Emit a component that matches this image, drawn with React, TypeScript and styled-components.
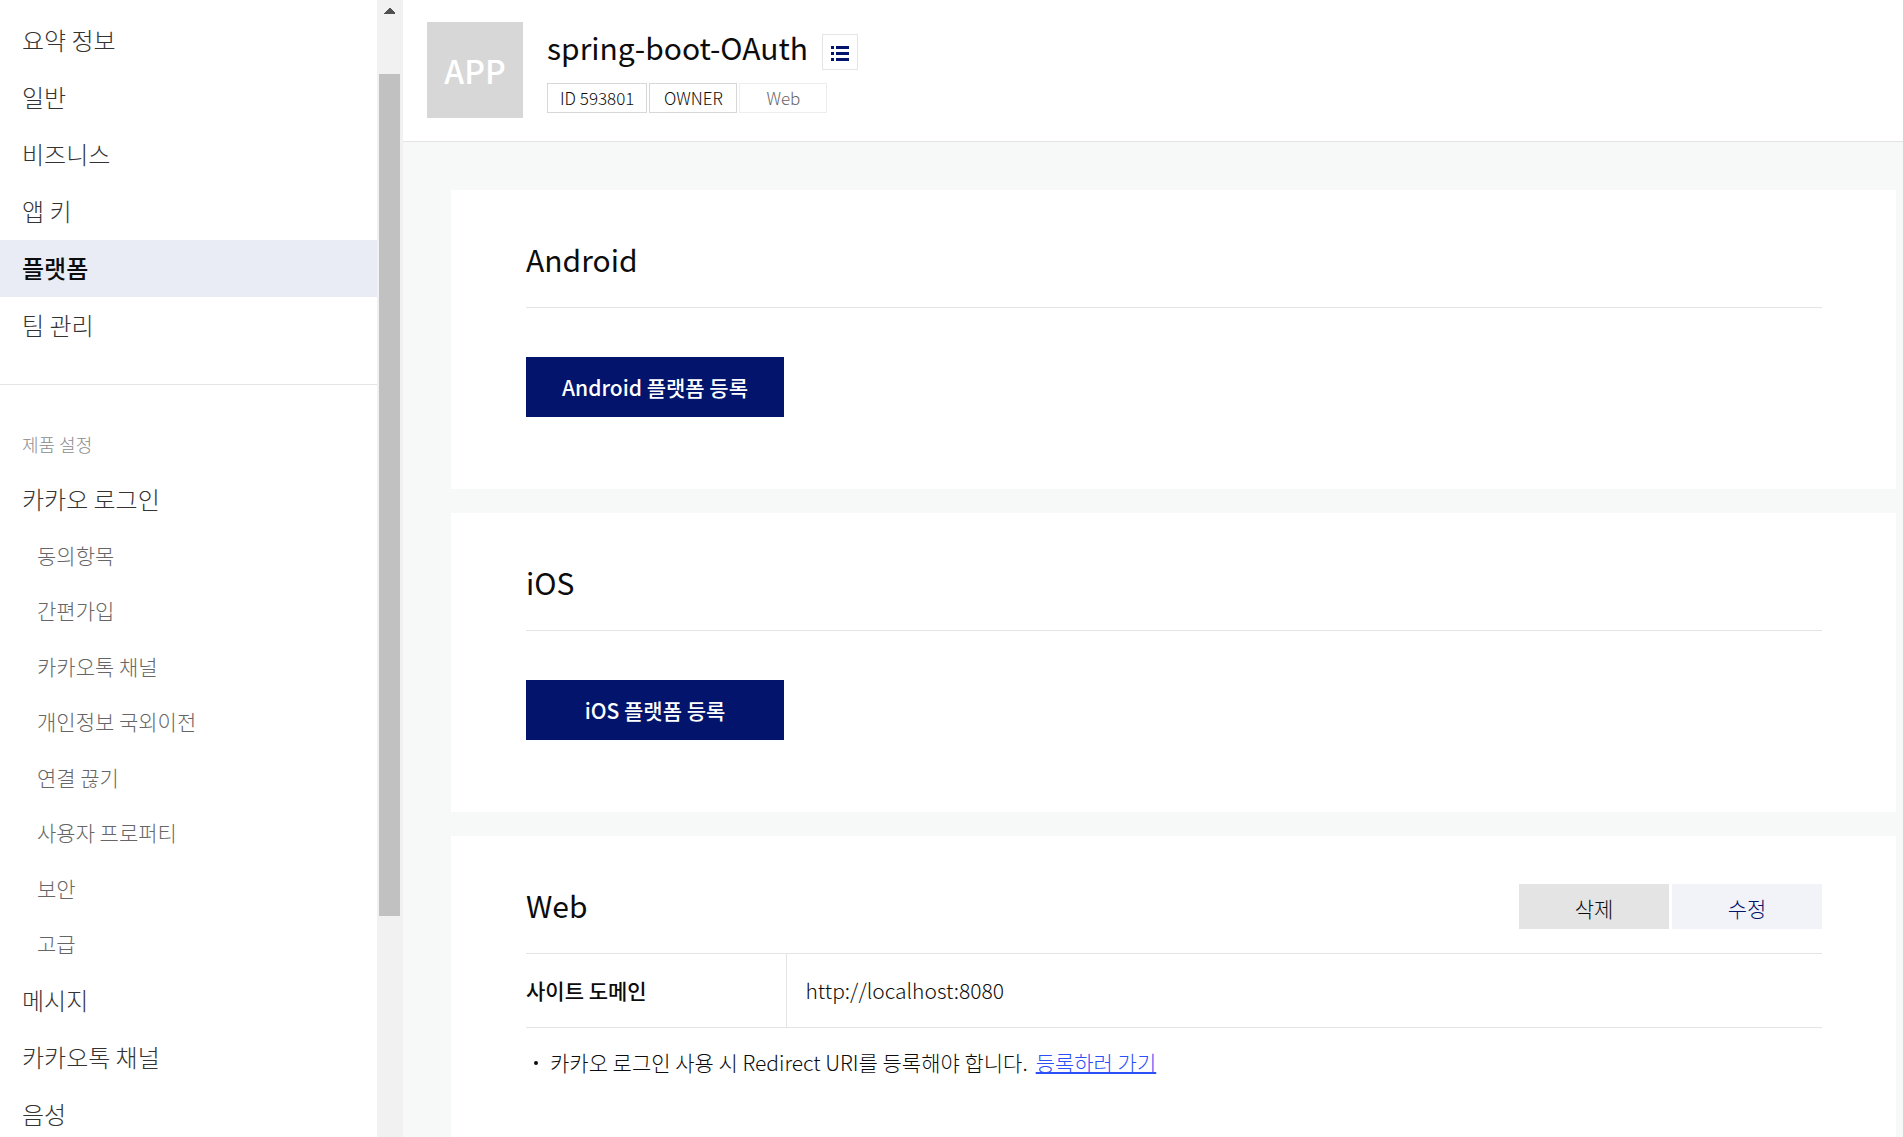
import React from "react";
import styled, { createGlobalStyle } from "styled-components";

const color = {
  navy: "#02146b",
  line: "#e4e4e4",
  text: "#0c0c0c",
  nav: "#333333",
  sub: "#666666",
  canvas: "#f6f9f8",
};

const GlobalStyle = createGlobalStyle`
  *, *::before, *::after { box-sizing: border-box; }
  body {
    margin: 0;
    background: ${color.canvas};
    color: ${color.text};
    font-family: "Noto Sans CJK KR", "Noto Sans", sans-serif;
    font-size: 21px;
    font-weight: 300;
  }
  h1, h2, p, ul { margin: 0; padding: 0; }
  ul { list-style: none; }
  button { font-family: inherit; cursor: pointer; }
`;

const Layout = styled.div`
  display: flex;
  height: 100vh;
  overflow: hidden;
`;

const Sidebar = styled.aside`
  display: flex;
  flex: 0 0 403px;
  overflow: hidden;
`;

const Nav = styled.nav`
  flex: 1;
  padding-top: 12px;
  background: #fff;
`;

const NavLink = styled.a<{ $active?: boolean }>`
  display: flex;
  align-items: center;
  height: 57px;
  padding: 0 22px 2px;
  font-size: 24px;
  line-height: 36px;
  font-weight: ${(p) => (p.$active ? 500 : 300)};
  color: ${(p) => (p.$active ? color.text : color.nav)};
  background: ${(p) => (p.$active ? "#e9ecf5" : "transparent")};
  text-decoration: none;
`;

const NavSection = styled.section`
  margin-top: 30px;
  padding-top: 45px;
  border-top: 1px solid ${color.line};
`;

const SectionLabel = styled.p`
  padding: 0 22px 13px;
  font-size: 18px;
  line-height: 28px;
  color: #8c8c8c;
`;

const SubList = styled.ul`
  display: grid;
  grid-auto-rows: 1fr;
  min-height: 444px;
`;

const SubLink = styled.a`
  display: flex;
  align-items: center;
  height: 100%;
  padding: 0 37px 2px;
  font-size: 21px;
  line-height: 32px;
  color: ${color.sub};
  text-decoration: none;
`;

const ScrollTrack = styled.div`
  display: flex;
  flex-direction: column;
  flex: 0 0 26px;
  padding: 0 3px 0 2px;
  background: #f1f1f1;
`;

const ScrollArrow = styled.svg`
  display: block;
  flex: 0 0 24px;
  width: 21px;
  fill: #505050;
`;

const ScrollPart = styled.div<{ $grow: number; $thumb?: boolean }>`
  flex: ${(p) => p.$grow} 1 0;
  background: ${(p) => (p.$thumb ? "#c1c1c1" : "transparent")};
`;

const Main = styled.main`
  flex: 1;
  min-width: 0;
`;

const AppHeader = styled.header`
  display: flex;
  gap: 24px;
  padding: 22px 24px 23px;
  background: #fff;
  border-bottom: 1px solid ${color.line};
`;

const AppThumb = styled.div`
  display: flex;
  align-items: center;
  justify-content: center;
  width: 96px;
  height: 96px;
  background: #d7d7d7;
  color: #fff;
  font-size: 32px;
  font-weight: 500;
`;

const AppInfo = styled.div`
  display: flex;
  flex-direction: column;
  gap: 13px;
  padding-top: 4px;
`;

const TitleRow = styled.div`
  display: flex;
  align-items: flex-start;
  gap: 14px;
  height: 44px;
`;

const AppTitle = styled.h1`
  font-size: 30px;
  line-height: 42px;
  font-weight: 400;
`;

const IconButton = styled.button`
  display: flex;
  align-items: center;
  justify-content: center;
  align-self: flex-end;
  width: 36px;
  height: 36px;
  padding: 2px 0 0;
  background: #fff;
  border: 1px solid ${color.line};
`;

const Tags = styled.ul`
  display: flex;
  gap: 2px;
`;

const Tag = styled.li<{ $muted?: boolean }>`
  display: flex;
  align-items: center;
  justify-content: center;
  min-width: 88px;
  height: 30px;
  padding: 0 12px;
  font-size: 17px;
  line-height: 28px;
  color: ${(p) => (p.$muted ? color.sub : color.text)};
  border: 1px solid ${(p) => (p.$muted ? "#ededed" : "#d7d7d7")};
`;

const Cards = styled.div`
  display: flex;
  flex-direction: column;
  gap: 24px;
  padding: 48px 7px 48px 48px;
`;

const Card = styled.section`
  padding: 48px 74px 72px 75px;
  background: #fff;
`;

const CardHead = styled.div`
  display: flex;
  align-items: flex-start;
  justify-content: space-between;
  min-height: 70px;
  border-bottom: 1px solid ${color.line};
`;

const CardTitle = styled.h2`
  font-size: 30px;
  line-height: 43px;
  font-weight: 400;
`;

const Actions = styled.div`
  display: flex;
  gap: 3px;
`;

const ActionButton = styled.button<{ $edit?: boolean }>`
  width: 150px;
  height: 45px;
  padding: 2px 0 0;
  border: 0;
  font-size: 21px;
  line-height: 32px;
  font-weight: 300;
  color: ${(p) => (p.$edit ? color.navy : color.text)};
  background: ${(p) => (p.$edit ? "#f2f3f9" : "#e4e4e4")};
`;

const RegisterButton = styled.button`
  display: block;
  min-width: 258px;
  height: 60px;
  margin-top: 49px;
  padding: 0 36px;
  border: 0;
  background: ${color.navy};
  color: #fff;
  font-size: 21px;
  line-height: 32px;
  font-weight: 500;
`;

const InfoTable = styled.table`
  width: 100%;
  border-collapse: collapse;
  border-bottom: 1px solid ${color.line};

  th, td {
    height: 73px;
    padding: 0 0 1px;
    text-align: left;
    line-height: 32px;
  }
  th {
    width: 260px;
    font-weight: 500;
    border-right: 1px solid ${color.line};
  }
  td { padding-left: 19px; }
`;

const Notes = styled.ul`
  margin-top: 18px;
`;

const Note = styled.li`
  display: flex;
  align-items: center;
  line-height: 32px;

  &::before {
    content: "";
    width: 4px;
    height: 4px;
    margin: 3px 12px 0 8px;
    border-radius: 50%;
    background: ${color.text};
  }
`;

const NoteLink = styled.a`
  margin-left: 8px;
  color: #2b50f6;
  text-decoration: underline;
  text-decoration-thickness: 2px;
`;

const appMenu = ["요약 정보", "일반", "비즈니스", "앱 키", "플랫폼", "팀 관리"];
const loginMenu = [
  "동의항목", "간편가입", "카카오톡 채널", "개인정보 국외이전",
  "연결 끊기", "사용자 프로퍼티", "보안", "고급",
];
const productMenu = ["메시지", "카카오톡 채널", "음성"];

function ListIcon() {
  return (
    <svg width="18" height="15" viewBox="0 0 18 15" fill={color.navy} shapeRendering="crispEdges" aria-hidden="true">
      {[0, 6, 12].map((y) => (
        <path key={y} d={`M0 ${y}h3v3h-3zM5 ${y}h13v3h-13z`} />
      ))}
    </svg>
  );
}

function PlatformCard({ name }: { name: string }) {
  return (
    <Card>
      <CardHead>
        <CardTitle>{name}</CardTitle>
      </CardHead>
      <RegisterButton type="button">{name} 플랫폼 등록</RegisterButton>
    </Card>
  );
}

export default function App() {
  return (
    <>
      <GlobalStyle />
      <Layout>
        <Sidebar>
          <Nav>
            {appMenu.map((item) => (
              <NavLink key={item} href="#" $active={item === "플랫폼"}>{item}</NavLink>
            ))}
            <NavSection>
              <SectionLabel>제품 설정</SectionLabel>
              <NavLink href="#">카카오 로그인</NavLink>
              <SubList>
                {loginMenu.map((item) => (
                  <li key={item}><SubLink href="#">{item}</SubLink></li>
                ))}
              </SubList>
              {productMenu.map((item) => (
                <NavLink key={item} href="#">{item}</NavLink>
              ))}
            </NavSection>
          </Nav>
          <ScrollTrack aria-hidden="true">
            <ScrollArrow viewBox="0 0 21 24" shapeRendering="crispEdges">
              <path d="M10 8h1l5 5v1h-11v-1z" />
            </ScrollArrow>
            <ScrollPart $grow={50} />
            <ScrollPart $grow={842} $thumb />
            <ScrollPart $grow={221} />
          </ScrollTrack>
        </Sidebar>
        <Main>
          <AppHeader>
            <AppThumb>APP</AppThumb>
            <AppInfo>
              <TitleRow>
                <AppTitle>spring-boot-OAuth</AppTitle>
                <IconButton type="button" aria-label="앱 목록"><ListIcon /></IconButton>
              </TitleRow>
              <Tags>
                <Tag>ID 593801</Tag>
                <Tag>OWNER</Tag>
                <Tag $muted>Web</Tag>
              </Tags>
            </AppInfo>
          </AppHeader>
          <Cards>
            <PlatformCard name="Android" />
            <PlatformCard name="iOS" />
            <Card>
              <CardHead>
                <CardTitle>Web</CardTitle>
                <Actions>
                  <ActionButton type="button">삭제</ActionButton>
                  <ActionButton type="button" $edit>수정</ActionButton>
                </Actions>
              </CardHead>
              <InfoTable>
                <tbody>
                  <tr>
                    <th scope="row">사이트 도메인</th>
                    <td>http://localhost:8080</td>
                  </tr>
                </tbody>
              </InfoTable>
              <Notes>
                <Note>
                  카카오 로그인 사용 시 Redirect URI를 등록해야 합니다.
                  <NoteLink href="#">등록하러 가기</NoteLink>
                </Note>
              </Notes>
            </Card>
          </Cards>
        </Main>
      </Layout>
    </>
  );
}
